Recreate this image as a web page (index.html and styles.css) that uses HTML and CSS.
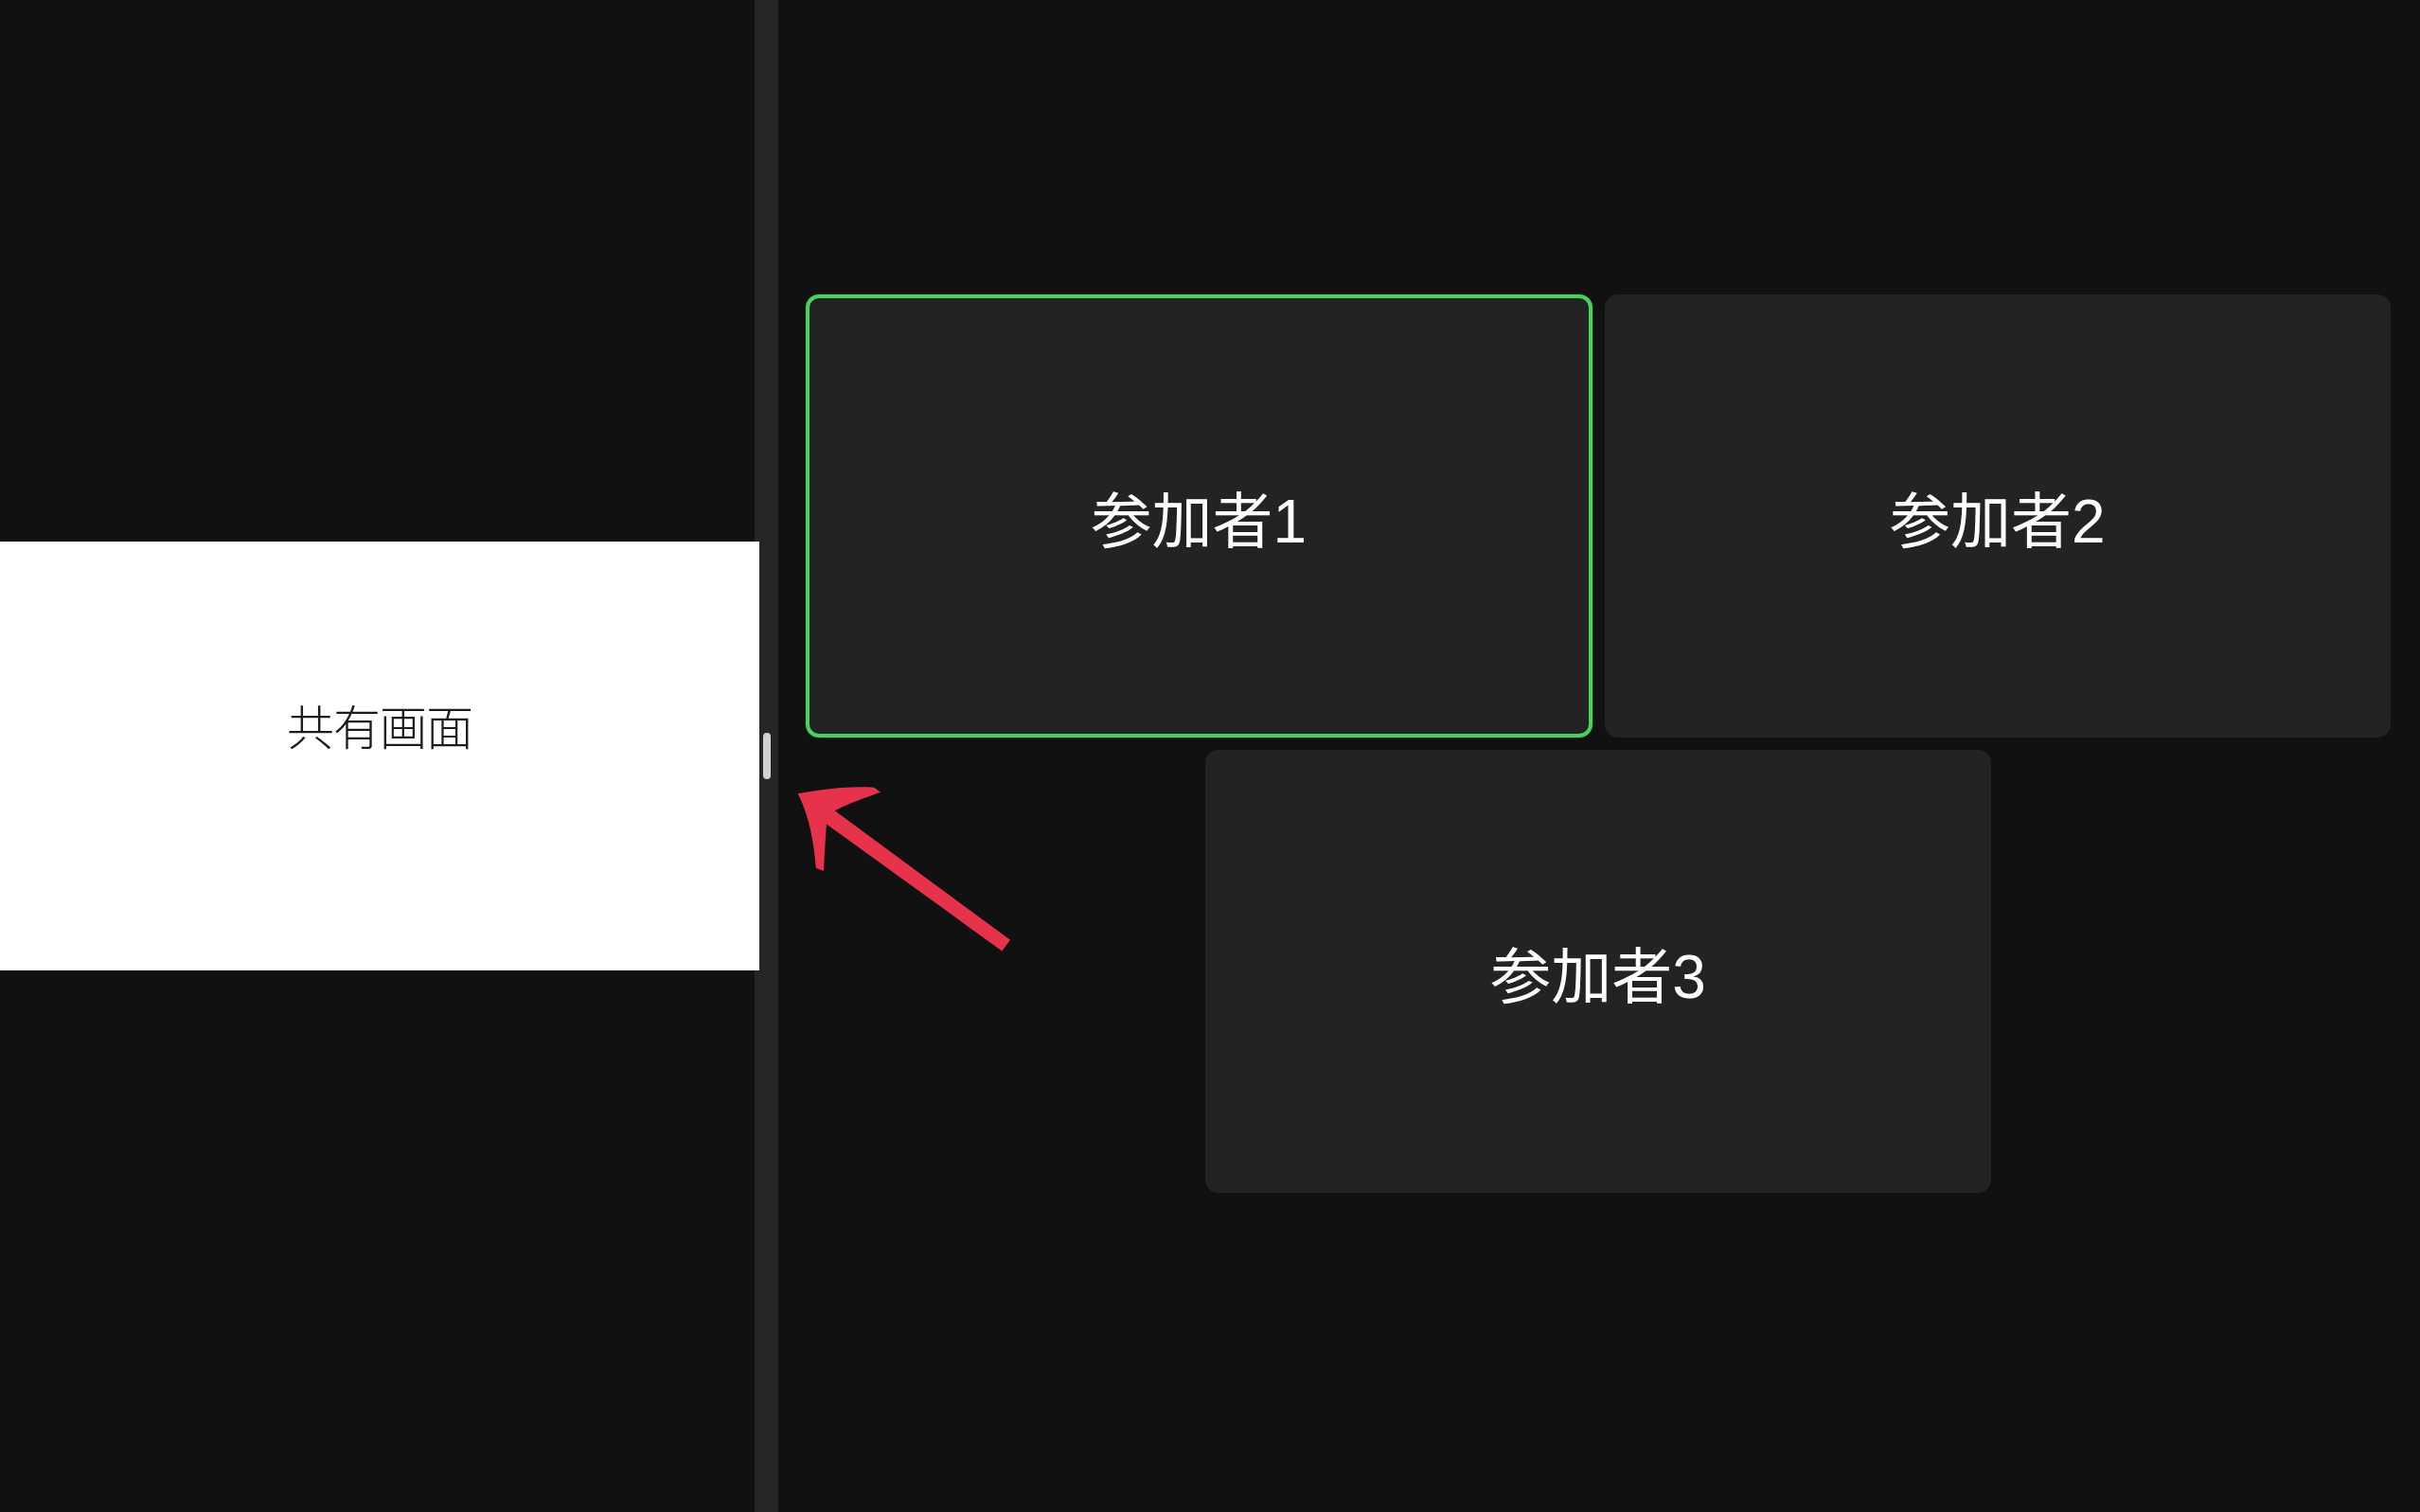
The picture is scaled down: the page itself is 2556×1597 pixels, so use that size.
FILE: index.html
```html
<!DOCTYPE html>
<html lang="ja">
<head>
<meta charset="utf-8">
<title>共有画面</title>
<link rel="stylesheet" href="styles.css">
</head>
<body>
<div class="app">
  <section class="left-pane">
    <div class="share">共有画面</div>
  </section>
  <div class="divider"><span class="handle"></span></div>
  <section class="right-pane">
    <div class="tiles">
      <div class="tile active">参加者1</div>
      <div class="tile">参加者2</div>
      <div class="tile">参加者3</div>
    </div>
  </section>
  <svg class="annot-arrow" viewBox="0 0 250 200" width="250" height="200" aria-hidden="true">
    <path d="M12.7 18.3 C40 13 70 10 93.3 11.7 L100 16.7 C85 22 68 28 51.7 36.2 L237 172.8 L228.3 184.5 L43 50.5 C42 62 41 80 40 100 L31.7 96.7 C30 70 24 40 12.7 18.3 Z" fill="#e6324b"/>
  </svg>
</div>
</body>
</html>
```

FILE: styles.css
```css
html, body {
  margin: 0;
  padding: 0;
  background: #111111;
}

body {
  font-family: "Noto Sans CJK JP", "Noto Sans", sans-serif;
}

.app {
  position: relative;
  display: flex;
  width: 2556px;
  height: 1597px;
  overflow: hidden;
}

.left-pane {
  width: 797px;
  flex: 0 0 797px;
  display: flex;
  align-items: center;
  position: relative;
  z-index: 2;
}

.share {
  width: 802px;
  height: 453px;
  box-sizing: border-box;
  padding-bottom: 68px;
  flex: 0 0 802px;
  background: #ffffff;
  display: flex;
  align-items: center;
  justify-content: center;
  color: #1c1c1c;
  font-size: 50px;
  font-weight: 300;
  letter-spacing: -1px;
}

.divider {
  width: 25px;
  flex: 0 0 25px;
  background: #262626;
  display: flex;
  align-items: center;
  box-sizing: border-box;
  padding-left: 9px;
}

.handle {
  position: relative;
  z-index: 3;
  display: block;
  width: 8px;
  height: 49px;
  border-radius: 4px;
  background: #d2d2d2;
}

.right-pane {
  flex: 1;
  box-sizing: border-box;
  padding: 311px 31px 0 29px;
}

.tiles {
  display: flex;
  flex-wrap: wrap;
  justify-content: center;
  gap: 13px;
}

.tile {
  width: calc((100% - 13px) / 2);
  height: 468px;
  box-sizing: border-box;
  background: #232323;
  border-radius: 14px;
  display: flex;
  align-items: center;
  justify-content: center;
  color: #ffffff;
  font-family: "Liberation Sans", "Noto Sans CJK JP", sans-serif;
  font-size: 64px;
  font-weight: 400;
}

.tile.active {
  border: 4px solid #4bd160;
  box-shadow: 0 0 0 1px rgba(20, 60, 20, 0.6);
}

.annot-arrow {
  position: absolute;
  left: 830px;
  top: 820px;
  z-index: 5;
}
```
